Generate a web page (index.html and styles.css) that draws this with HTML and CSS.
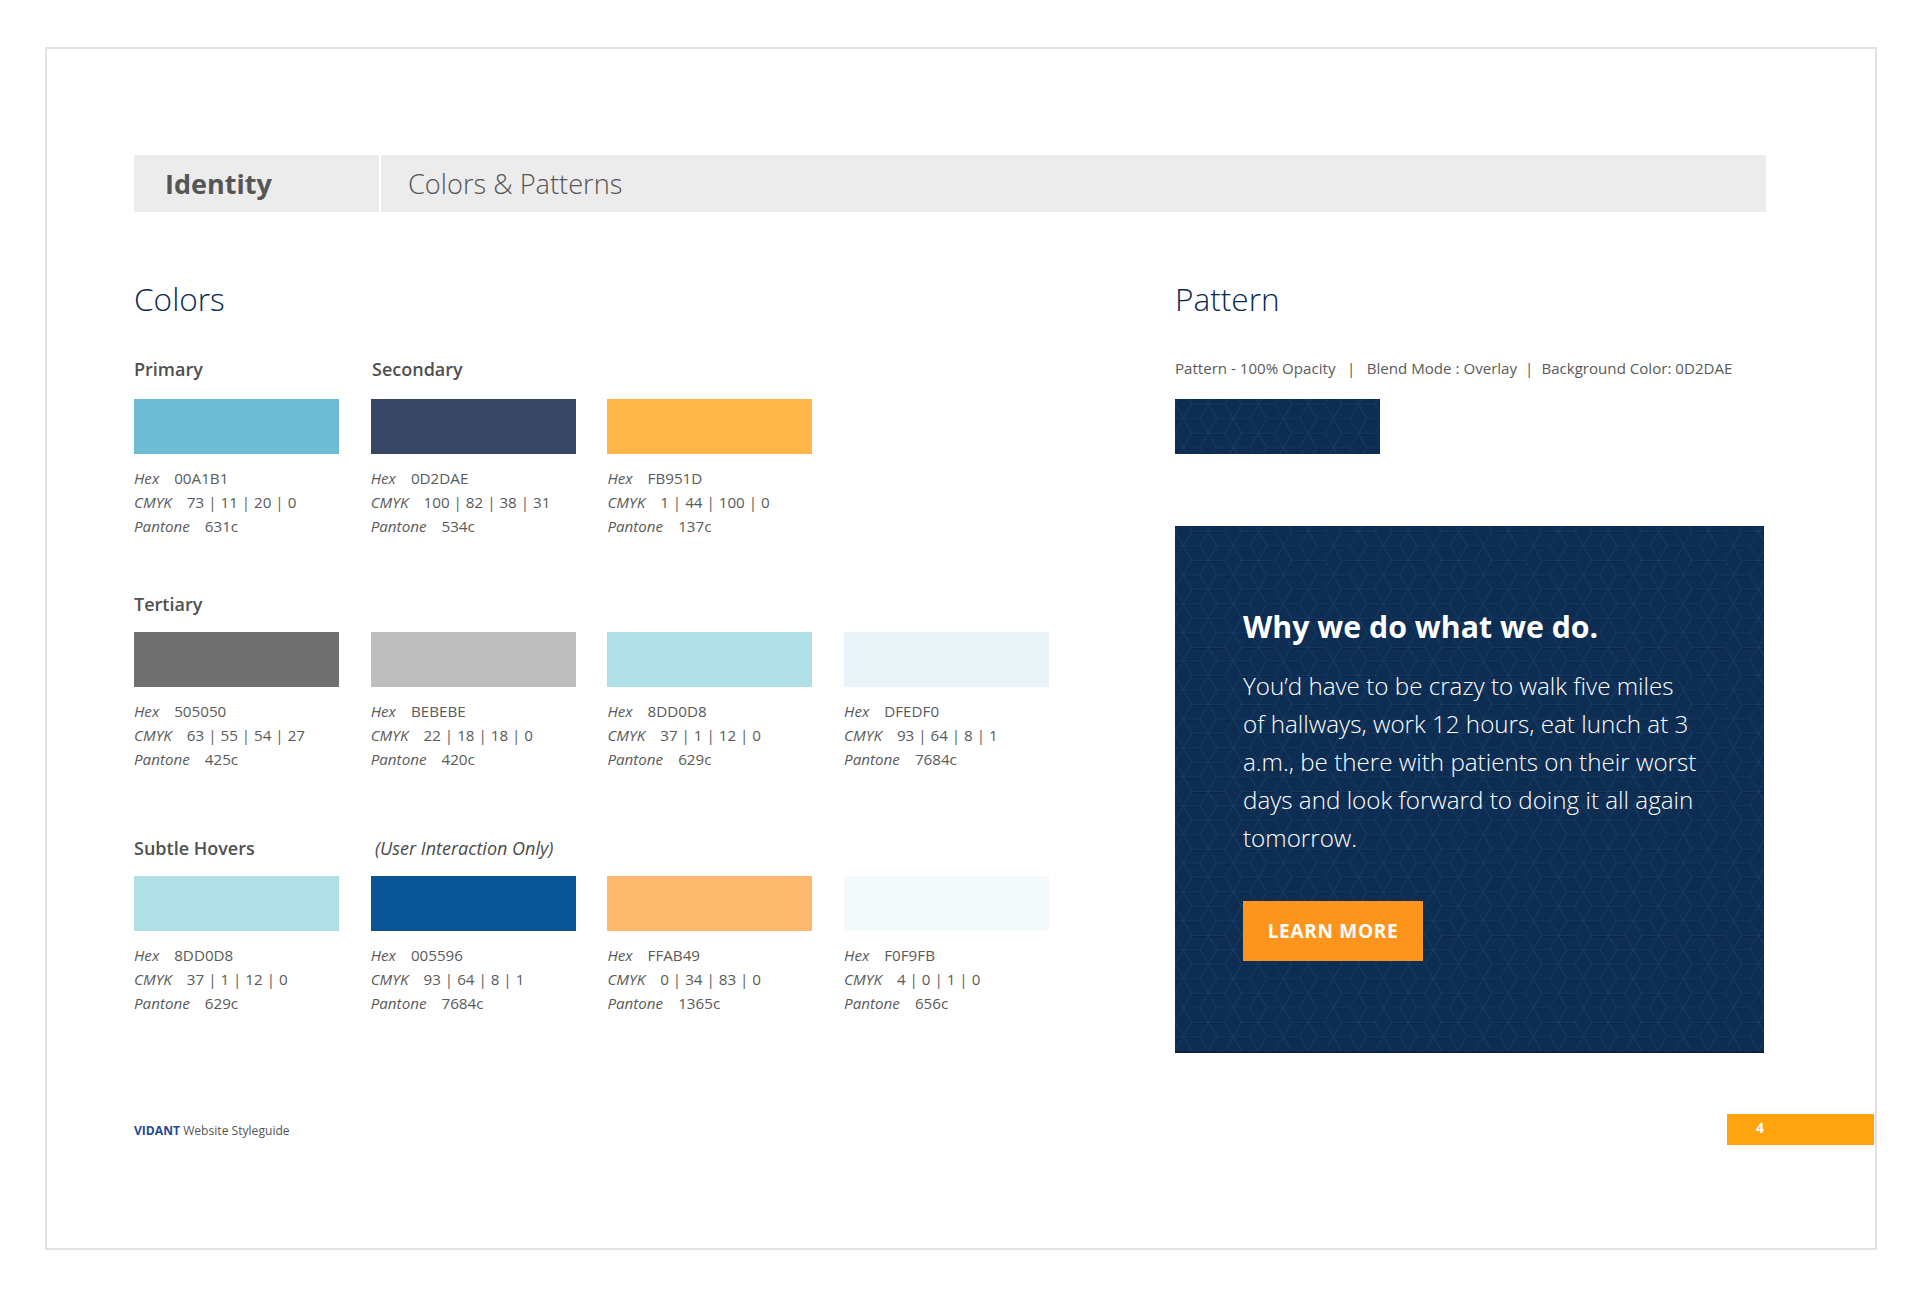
FILE: index.html
```html
<!DOCTYPE html>
<html lang="en">
<head>
<meta charset="utf-8">
<title>Identity - Colors &amp; Patterns</title>
<link rel="stylesheet" href="styles.css">
</head>
<body>
<div class="frame">
  <header class="title-bar">
    <div class="title-section">Identity</div>
    <div class="title-page">Colors &amp; Patterns</div>
  </header>
  <main class="columns">
    <section class="colors">
      <h2 class="heading">Colors</h2>
      <div class="labels labels-first"><span class="label">Primary</span><span class="label label-second">Secondary</span></div>
      <div class="swatches">
        <div class="chip"><div class="swatch c-primary"></div><p class="meta"><i>Hex</i>00A1B1</p><p class="meta"><i>CMYK</i>73 | 11 | 20 | 0</p><p class="meta"><i>Pantone</i>631c</p></div>
        <div class="chip"><div class="swatch c-navy"></div><p class="meta"><i>Hex</i>0D2DAE</p><p class="meta"><i>CMYK</i>100 | 82 | 38 | 31</p><p class="meta"><i>Pantone</i>534c</p></div>
        <div class="chip"><div class="swatch c-orange"></div><p class="meta"><i>Hex</i>FB951D</p><p class="meta"><i>CMYK</i>1 | 44 | 100 | 0</p><p class="meta"><i>Pantone</i>137c</p></div>
      </div>
      <div class="labels labels-tertiary"><span class="label">Tertiary</span></div>
      <div class="swatches">
        <div class="chip"><div class="swatch c-grey"></div><p class="meta"><i>Hex</i>505050</p><p class="meta"><i>CMYK</i>63 | 55 | 54 | 27</p><p class="meta"><i>Pantone</i>425c</p></div>
        <div class="chip"><div class="swatch c-silver"></div><p class="meta"><i>Hex</i>BEBEBE</p><p class="meta"><i>CMYK</i>22 | 18 | 18 | 0</p><p class="meta"><i>Pantone</i>420c</p></div>
        <div class="chip"><div class="swatch c-aqua"></div><p class="meta"><i>Hex</i>8DD0D8</p><p class="meta"><i>CMYK</i>37 | 1 | 12 | 0</p><p class="meta"><i>Pantone</i>629c</p></div>
        <div class="chip"><div class="swatch c-ice"></div><p class="meta"><i>Hex</i>DFEDF0</p><p class="meta"><i>CMYK</i>93 | 64 | 8 | 1</p><p class="meta"><i>Pantone</i>7684c</p></div>
      </div>
      <div class="labels labels-hover"><span class="label">Subtle Hovers</span><em class="label-note">(User Interaction Only)</em></div>
      <div class="swatches">
        <div class="chip"><div class="swatch c-aqua"></div><p class="meta"><i>Hex</i>8DD0D8</p><p class="meta"><i>CMYK</i>37 | 1 | 12 | 0</p><p class="meta"><i>Pantone</i>629c</p></div>
        <div class="chip"><div class="swatch c-blue"></div><p class="meta"><i>Hex</i>005596</p><p class="meta"><i>CMYK</i>93 | 64 | 8 | 1</p><p class="meta"><i>Pantone</i>7684c</p></div>
        <div class="chip"><div class="swatch c-peach"></div><p class="meta"><i>Hex</i>FFAB49</p><p class="meta"><i>CMYK</i>0 | 34 | 83 | 0</p><p class="meta"><i>Pantone</i>1365c</p></div>
        <div class="chip"><div class="swatch c-mist"></div><p class="meta"><i>Hex</i>F0F9FB</p><p class="meta"><i>CMYK</i>4 | 0 | 1 | 0</p><p class="meta"><i>Pantone</i>656c</p></div>
      </div>
    </section>
    <section class="pattern">
      <h2 class="heading">Pattern</h2>
      <p class="pattern-spec"><span>Pattern - 100% Opacity</span><span class="sep-wide">|</span><span>Blend Mode : Overlay</span><span class="sep">|</span><span>Background Color: 0D2DAE</span></p>
      <div class="pattern-swatch"></div>
      <article class="panel">
        <h3 class="panel-title">Why we do what we do.</h3>
        <p class="panel-body">You’d have to be crazy to walk five miles of hallways, work 12 hours, eat lunch at 3 a.m., be there with patients on their worst days and look forward to doing it all again tomorrow.</p>
        <a class="button">LEARN MORE</a>
      </article>
    </section>
  </main>
  <footer class="footer">
    <div class="footer-brand"><b>VIDANT</b> Website Styleguide</div>
    <div class="page-tag">4</div>
  </footer>
</div>
</body>
</html>
```
FILE: styles.css
```css
* { box-sizing: border-box; }
html, body { margin: 0; padding: 0; background: #fff; }
body { height: 1293px; padding: 47px 0 0 45px; font-family: "Open Sans", "Noto Sans", sans-serif; color: #555; }
h2, h3, p { margin: 0; }

.frame { width: 1832px; height: 1203px; border: 2px solid #e2e2e2; padding: 106px 1px 0 87px; }

.title-bar { display: flex; width: 1632px; height: 57px; gap: 2px; }
.title-section { width: 245px; padding-left: 31px; background: #ececec; font-size: 27px; font-weight: 700; line-height: 57px; color: #555; }
.title-page { flex: 1; padding-left: 27px; background: #ececec; font-size: 27.2px; font-weight: 300; line-height: 57px; color: #555; }

.columns { display: flex; margin-top: 64px; }
.colors { flex: 0 0 1041px; }
.pattern { flex: 0 0 589px; }

.heading { font-size: 31.6px; font-weight: 300; line-height: 45px; color: #0a2a52; }

.labels { display: flex; height: 24px; margin-bottom: 16px; }
.labels-first { margin-top: 36px; margin-bottom: 18px; }
.labels-tertiary { margin-top: 54px; }
.labels-hover { margin-top: 65px; }
.label { width: 238px; font-size: 18px; font-weight: 600; line-height: 24px; color: #505050; }
.label-note { font-size: 18px; font-weight: 400; line-height: 24px; padding-left: 3px; color: #4a4a4a; }

.swatches { display: flex; gap: 31.7px; }
.chip { width: 205px; }
.swatch { height: 55px; margin-bottom: 12px; }
.meta { font-size: 15.2px; line-height: 24px; white-space: nowrap; color: #5a5a5a; }
.meta i { margin-right: 15px; }

.c-primary { background: #6cbdd3; }
.c-navy { background: #374664; }
.c-orange { background: #ffb547; }
.c-grey { background: #707070; }
.c-silver { background: #bebebe; }
.c-aqua { background: #b0dfe5; }
.c-ice { background: #e9f3f8; }
.c-blue { background: #085494; }
.c-peach { background: #fdb96e; }
.c-mist { background: #f4f9fc; }

.pattern-spec { margin-top: 35px; font-size: 15.1px; line-height: 24px; white-space: nowrap; color: #5a5a5a; }
.sep-wide { margin: 0 11.5px; }
.sep { margin: 0 8px; }

.pattern-swatch, .panel {
  background-color: #0d2d53;
  background-image: url("data:image/svg+xml,%3Csvg xmlns='http://www.w3.org/2000/svg' xmlns:xlink='http://www.w3.org/1999/xlink' width='50' height='28.87' viewBox='0 0 50 28.87'%3E%3Cdefs%3E%3Cpath id='h' d='M16.67 0L8.33 14.43L-8.33 14.43L-16.67 0L-8.33 -14.43L8.33 -14.43ZM0 0L8.33 14.43M0 0L8.33 -14.43M0 0L-16.67 0'/%3E%3Cg id='t'%3E%3Cuse xlink:href='%23h'/%3E%3Cuse xlink:href='%23h' x='50'/%3E%3Cuse xlink:href='%23h' y='28.87'/%3E%3Cuse xlink:href='%23h' x='50' y='28.87'/%3E%3Cuse xlink:href='%23h' x='25' y='14.43'/%3E%3C/g%3E%3C/defs%3E%3Cg fill='none' stroke-width='1.2'%3E%3Cuse xlink:href='%23t' stroke='%230a2646' y='1'/%3E%3Cuse xlink:href='%23t' stroke='%23133863'/%3E%3C/g%3E%3C/svg%3E");
  background-size: 50px 28.87px;
}
.pattern-swatch { width: 205px; height: 55px; margin-top: 19px; background-position: 24.67px 20px; }

.panel { height: 527px; margin-top: 72px; padding: 81px 0 0 68px; background-position: 24.67px 20px; box-shadow: inset 0 -2px 0 #0a2244; }
.panel-title { font-size: 30.3px; font-weight: 700; line-height: 40px; color: #fff; }
.panel-body { width: 456px; margin-top: 20px; font-size: 24.2px; font-weight: 300; line-height: 38px; color: #fff; }
.button { display: flex; align-items: center; justify-content: center; width: 180px; height: 60px; margin-top: 44px; padding-bottom: 1px; background: #fd951d; font-size: 19px; font-weight: 700; letter-spacing: 0.7px; color: #fff; }

.footer { display: flex; align-items: center; justify-content: space-between; margin-top: 61px; }
.footer-brand { font-size: 12.1px; padding-top: 1px; color: #555; }
.footer-brand b { font-weight: 700; color: #1f4a94; }
.page-tag { width: 147px; height: 31px; padding-left: 29px; background: #ffa30f; font-size: 14px; font-weight: 700; line-height: 28px; color: #fff; }
```
